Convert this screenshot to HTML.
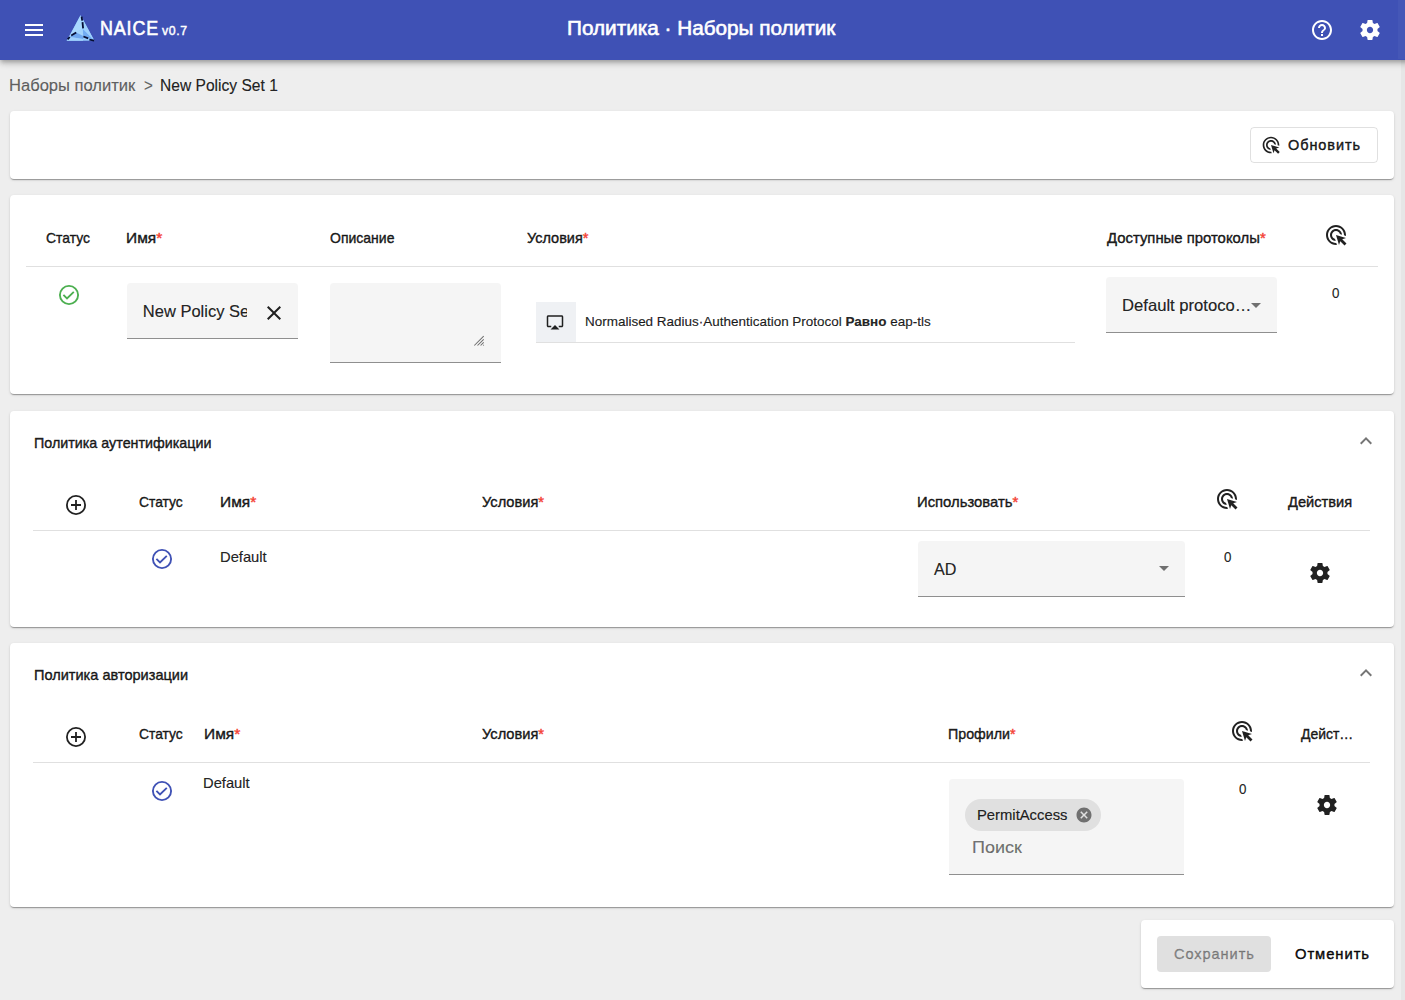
<!DOCTYPE html>
<html><head><meta charset="utf-8">
<title>NAICE</title>
<style>
*{box-sizing:border-box;margin:0;padding:0}
html,body{width:1405px;height:1000px;overflow:hidden}
body{background:#eeeeee;font-family:"Liberation Sans",sans-serif;color:rgba(0,0,0,0.87);position:relative}
.a{position:absolute}
.t{white-space:nowrap;line-height:normal}
.hdr{left:0;top:0;width:1435px;height:60px;background:#3f51b5;box-shadow:0 2px 4px -1px rgba(0,0,0,.2),0 4px 5px 0 rgba(0,0,0,.14),0 1px 10px 0 rgba(0,0,0,.12)}
.card{background:#fff;border-radius:4px;box-shadow:0 2px 1px -1px rgba(0,0,0,.2),0 1px 1px 0 rgba(0,0,0,.14),0 1px 3px 0 rgba(0,0,0,.12)}
.div{height:1px;background:#e0e0e0}
.fill{background:#f5f5f5;border-radius:4px 4px 0 0;border-bottom:1px solid #8f8f8f}
svg{display:block}
#ov{z-index:10}
</style></head>
<body>
<div class="a hdr"></div>
<svg class="a" style="left:64px;top:13px" width="33" height="30" viewBox="0 0 33 30">
  <polygon points="16.5,2.2 30.4,27.8 2.6,27.8" fill="#93c9fc"/>
  <polygon points="16.5,2.2 18.6,15.5 12,19.6 5,24.5" fill="#a9d9fe"/>
  <polygon points="18.6,15.5 30.4,27.8 19.2,23" fill="#72acf2"/>
  <polygon points="18.6,15.5 17.4,3.6 30.4,27.8" fill="#9dd0fd"/>
  <polygon points="12,19.6 18.6,15.5 19.2,23" fill="#a3d4fd"/>
  <polygon points="12,19.6 19.2,23 19,26 6,24" fill="#6ea7ef"/>
  <polygon points="2.6,27.8 19,27.8 19,26 6,24" fill="#9fd1fd"/>
  <g stroke="#050d33" stroke-width="1.8" fill="none" stroke-linecap="butt">
    <path d="M17.6 3.6 L18.2 7.6"/>
    <path d="M18.5 9.2 L19.1 15.4"/>
    <path d="M3.6 26.4 L5.8 24.0"/>
    <path d="M7.2 22.4 L12.2 19.4"/>
    <path d="M19.4 23.5 L24.2 25.4"/>
    <path d="M25.4 26.6 L30.2 27.6"/>
  </g>
</svg>

<!-- cards -->
<div class="a card" style="left:10px;top:111px;width:1384px;height:68px"></div>
<div class="a" style="left:1250px;top:127px;width:128px;height:36px;border:1px solid rgba(0,0,0,0.12);border-radius:4px"></div>

<div class="a card" style="left:10px;top:195px;width:1384px;height:199px"></div>
<div class="a div" style="left:26px;top:266px;width:1352px"></div>
<div class="a fill" style="left:127px;top:283px;width:171px;height:56px"></div>
<div class="a fill" style="left:330px;top:283px;width:171px;height:80px"></div>
<svg class="a" style="left:472px;top:334px" width="14" height="14" viewBox="0 0 14 14"><path d="M2.3 11.5 L11.7 2.1 M5.5 11.5 L11.7 5.3 M8.6 11.5 L11.7 8.4 M11.2 11.5 L11.8 10.9" stroke="#6e6e6e" stroke-width="1.05"/></svg>
<div class="a" style="left:536px;top:302px;width:40px;height:40px;background:#eff1f4"></div>
<div class="a div" style="left:536px;top:342px;width:539px"></div>
<div class="a fill" style="left:1106px;top:277px;width:171px;height:56px"></div>

<div class="a card" style="left:10px;top:411px;width:1384px;height:216px"></div>
<div class="a div" style="left:33px;top:530px;width:1337px"></div>
<div class="a fill" style="left:918px;top:541px;width:267px;height:56px"></div>

<div class="a card" style="left:10px;top:643px;width:1384px;height:264px"></div>
<div class="a div" style="left:33px;top:762px;width:1337px"></div>
<div class="a fill" style="left:949px;top:779px;width:235px;height:96px"></div>
<div class="a" style="left:965px;top:799px;width:136px;height:32px;border-radius:16px;background:#e0e0e0"></div>

<div class="a card" style="left:1141px;top:920px;width:253px;height:68px"></div>
<div class="a" style="left:1157px;top:936px;width:114px;height:36px;border-radius:4px;background:#e0e0e0"></div>

<svg class="a" style="left:22px;top:18px" width="24" height="24" viewBox="0 0 24 24"><path fill="#fff" d="M3 18h18v-2H3v2zm0-5h18v-2H3v2zm0-7v2h18V6H3z"/></svg>
<svg class="a" style="left:1310px;top:18px" width="24" height="24" viewBox="0 0 24 24"><path fill="#fff" d="M11 18h2v-2h-2v2zm1-16C6.48 2 2 6.48 2 12s4.48 10 10 10 10-4.48 10-10S17.52 2 12 2zm0 18c-4.41 0-8-3.59-8-8s3.59-8 8-8 8 3.59 8 8-3.59 8-8 8zm0-14c-2.21 0-4 1.79-4 4h2c0-1.1.9-2 2-2s2 .9 2 2c0 2-3 1.75-3 5h2c0-2.25 3-2.5 3-5 0-2.21-1.79-4-4-4z"/></svg>
<svg class="a" style="left:1358px;top:18px" width="24" height="24" viewBox="0 0 24 24"><path fill="#fff" d="M19.43 12.98c.04-.32.07-.64.07-.98s-.03-.66-.07-.98l2.11-1.65c.19-.15.24-.42.12-.64l-2-3.46c-.12-.22-.39-.3-.61-.22l-2.49 1c-.52-.4-1.08-.73-1.69-.98l-.38-2.65C14.46 2.18 14.25 2 14 2h-4c-.25 0-.46.18-.49.42l-.38 2.65c-.61.25-1.17.59-1.69.98l-2.49-1c-.23-.09-.49 0-.61.22l-2 3.46c-.13.22-.07.49.12.64l2.11 1.65c-.04.32-.07.65-.07.98s.03.66.07.98l-2.11 1.65c-.19.15-.24.42-.12.64l2 3.46c.12.22.39.3.61.22l2.49-1c.52.4 1.08.73 1.69.98l.38 2.65c.03.24.24.42.49.42h4c.25 0 .46-.18.49-.42l.38-2.65c.61-.25 1.17-.59 1.69-.98l2.49 1c.23.09.49 0 .61-.22l2-3.46c.12-.22.07-.49-.12-.64l-2.11-1.65zM12 15.15c-1.74 0-3.15-1.41-3.15-3.15s1.41-3.15 3.15-3.15 3.15 1.41 3.15 3.15-1.41 3.15-3.15 3.15z"/></svg>
<svg class="a" style="left:1261px;top:135px" width="20" height="20" viewBox="0 0 24 24"><path fill="rgba(0,0,0,0.87)" d="M11.71 17.99C8.53 17.84 6 15.22 6 12c0-3.31 2.69-6 6-6 3.22 0 5.84 2.53 5.99 5.71l-2.1-.63C15.48 9.31 13.89 8 12 8c-2.21 0-4 1.79-4 4 0 1.89 1.31 3.48 3.08 3.89l.63 2.1zM22 12c0 .3-.01.6-.04.9l-1.97-.59c.01-.1.01-.21.01-.31 0-4.42-3.58-8-8-8s-8 3.58-8 8 3.58 8 8 8c.1 0 .21 0 .31-.01l.59 1.97c-.3.03-.6.04-.9.04-5.52 0-10-4.48-10-10S6.48 2 12 2s10 4.48 10 10zm-3.77 4.26L22 15l-10-3 3 10 1.26-3.77 4.27 4.27 1.97-1.97-4.27-4.27z"/></svg>
<svg class="a" style="left:1323.5px;top:223px" width="24" height="24" viewBox="0 0 24 24"><path fill="rgba(0,0,0,0.87)" d="M11.71 17.99C8.53 17.84 6 15.22 6 12c0-3.31 2.69-6 6-6 3.22 0 5.84 2.53 5.99 5.71l-2.1-.63C15.48 9.31 13.89 8 12 8c-2.21 0-4 1.79-4 4 0 1.89 1.31 3.48 3.08 3.89l.63 2.1zM22 12c0 .3-.01.6-.04.9l-1.97-.59c.01-.1.01-.21.01-.31 0-4.42-3.58-8-8-8s-8 3.58-8 8 3.58 8 8 8c.1 0 .21 0 .31-.01l.59 1.97c-.3.03-.6.04-.9.04-5.52 0-10-4.48-10-10S6.48 2 12 2s10 4.48 10 10zm-3.77 4.26L22 15l-10-3 3 10 1.26-3.77 4.27 4.27 1.97-1.97-4.27-4.27z"/></svg>
<svg class="a" style="left:56.5px;top:283px" width="24" height="24" viewBox="0 0 24 24"><circle cx="12" cy="12" r="9.1" fill="none" stroke="#4caf50" stroke-width="1.85"/><path d="M6.4 11.9 L10 15.5 L16.8 8.8" fill="none" stroke="#4caf50" stroke-width="1.85"/></svg>
<svg class="a" style="left:262px;top:301px" width="24" height="24" viewBox="0 0 24 24"><path fill="rgba(0,0,0,0.87)" d="M19 6.41 17.59 5 12 10.59 6.41 5 5 6.41 10.59 12 5 17.59 6.41 19 12 13.41 17.59 19 19 17.59 13.41 12z"/></svg>
<svg class="a" style="left:545.6px;top:313px" width="18" height="18" viewBox="0 0 24 24"><path fill="rgba(0,0,0,0.87)" d="M6 22h12l-6-6zM21 3H3c-1.1 0-2 .9-2 2v12c0 1.1.9 2 2 2h4v-2H3V5h18v12h-4v2h4c1.1 0 2-.9 2-2V5c0-1.1-.9-2-2-2z"/></svg>
<svg class="a" style="left:1244px;top:293px" width="24" height="24" viewBox="0 0 24 24"><path fill="rgba(0,0,0,0.54)" d="M7 10l5 5 5-5z"/></svg>
<svg class="a" style="left:1354px;top:429px" width="24" height="24" viewBox="0 0 24 24"><path fill="rgba(0,0,0,0.54)" d="M12 8l-6 6 1.41 1.41L12 10.83l4.59 4.58L18 14z"/></svg>
<svg class="a" style="left:64.2px;top:492.8px" width="24" height="24" viewBox="0 0 24 24"><circle cx="12" cy="12" r="9.1" fill="none" stroke="rgba(0,0,0,0.87)" stroke-width="1.8"/><path d="M12 7 V17 M7 12 H17" fill="none" stroke="rgba(0,0,0,0.87)" stroke-width="1.8"/></svg>
<svg class="a" style="left:1215px;top:486.5px" width="24" height="24" viewBox="0 0 24 24"><path fill="rgba(0,0,0,0.87)" d="M11.71 17.99C8.53 17.84 6 15.22 6 12c0-3.31 2.69-6 6-6 3.22 0 5.84 2.53 5.99 5.71l-2.1-.63C15.48 9.31 13.89 8 12 8c-2.21 0-4 1.79-4 4 0 1.89 1.31 3.48 3.08 3.89l.63 2.1zM22 12c0 .3-.01.6-.04.9l-1.97-.59c.01-.1.01-.21.01-.31 0-4.42-3.58-8-8-8s-8 3.58-8 8 3.58 8 8 8c.1 0 .21 0 .31-.01l.59 1.97c-.3.03-.6.04-.9.04-5.52 0-10-4.48-10-10S6.48 2 12 2s10 4.48 10 10zm-3.77 4.26L22 15l-10-3 3 10 1.26-3.77 4.27 4.27 1.97-1.97-4.27-4.27z"/></svg>
<svg class="a" style="left:149.5px;top:547px" width="24" height="24" viewBox="0 0 24 24"><circle cx="12" cy="12" r="9.1" fill="none" stroke="#3f51b5" stroke-width="1.85"/><path d="M6.4 11.9 L10 15.5 L16.8 8.8" fill="none" stroke="#3f51b5" stroke-width="1.85"/></svg>
<svg class="a" style="left:1152px;top:556px" width="24" height="24" viewBox="0 0 24 24"><path fill="rgba(0,0,0,0.54)" d="M7 10l5 5 5-5z"/></svg>
<svg class="a" style="left:1308px;top:561px" width="24" height="24" viewBox="0 0 24 24"><path fill="rgba(0,0,0,0.87)" d="M19.43 12.98c.04-.32.07-.64.07-.98s-.03-.66-.07-.98l2.11-1.65c.19-.15.24-.42.12-.64l-2-3.46c-.12-.22-.39-.3-.61-.22l-2.49 1c-.52-.4-1.08-.73-1.69-.98l-.38-2.65C14.46 2.18 14.25 2 14 2h-4c-.25 0-.46.18-.49.42l-.38 2.65c-.61.25-1.17.59-1.69.98l-2.49-1c-.23-.09-.49 0-.61.22l-2 3.46c-.13.22-.07.49.12.64l2.11 1.65c-.04.32-.07.65-.07.98s.03.66.07.98l-2.11 1.65c-.19.15-.24.42-.12.64l2 3.46c.12.22.39.3.61.22l2.49-1c.52.4 1.08.73 1.69.98l.38 2.65c.03.24.24.42.49.42h4c.25 0 .46-.18.49-.42l.38-2.65c.61-.25 1.17-.59 1.69-.98l2.49 1c.23.09.49 0 .61-.22l2-3.46c.12-.22.07-.49-.12-.64l-2.11-1.65zM12 15.15c-1.74 0-3.15-1.41-3.15-3.15s1.41-3.15 3.15-3.15 3.15 1.41 3.15 3.15-1.41 3.15-3.15 3.15z"/></svg>
<svg class="a" style="left:1353.7px;top:660.6px" width="24" height="24" viewBox="0 0 24 24"><path fill="rgba(0,0,0,0.54)" d="M12 8l-6 6 1.41 1.41L12 10.83l4.59 4.58L18 14z"/></svg>
<svg class="a" style="left:64.2px;top:724.8px" width="24" height="24" viewBox="0 0 24 24"><circle cx="12" cy="12" r="9.1" fill="none" stroke="rgba(0,0,0,0.87)" stroke-width="1.8"/><path d="M12 7 V17 M7 12 H17" fill="none" stroke="rgba(0,0,0,0.87)" stroke-width="1.8"/></svg>
<svg class="a" style="left:1229.8px;top:718.6px" width="24" height="24" viewBox="0 0 24 24"><path fill="rgba(0,0,0,0.87)" d="M11.71 17.99C8.53 17.84 6 15.22 6 12c0-3.31 2.69-6 6-6 3.22 0 5.84 2.53 5.99 5.71l-2.1-.63C15.48 9.31 13.89 8 12 8c-2.21 0-4 1.79-4 4 0 1.89 1.31 3.48 3.08 3.89l.63 2.1zM22 12c0 .3-.01.6-.04.9l-1.97-.59c.01-.1.01-.21.01-.31 0-4.42-3.58-8-8-8s-8 3.58-8 8 3.58 8 8 8c.1 0 .21 0 .31-.01l.59 1.97c-.3.03-.6.04-.9.04-5.52 0-10-4.48-10-10S6.48 2 12 2s10 4.48 10 10zm-3.77 4.26L22 15l-10-3 3 10 1.26-3.77 4.27 4.27 1.97-1.97-4.27-4.27z"/></svg>
<svg class="a" style="left:149.5px;top:779px" width="24" height="24" viewBox="0 0 24 24"><circle cx="12" cy="12" r="9.1" fill="none" stroke="#3f51b5" stroke-width="1.85"/><path d="M6.4 11.9 L10 15.5 L16.8 8.8" fill="none" stroke="#3f51b5" stroke-width="1.85"/></svg>
<svg class="a" style="left:1074.6px;top:806px" width="18" height="18" viewBox="0 0 24 24"><path fill="rgba(0,0,0,0.5)" d="M12 2C6.47 2 2 6.47 2 12s4.47 10 10 10 10-4.47 10-10S17.53 2 12 2zm5 13.59L15.59 17 12 13.41 8.41 17 7 15.59 10.59 12 7 8.41 8.41 7 12 10.59 15.59 7 17 8.41 13.41 12 17 15.59z"/></svg>
<svg class="a" style="left:1314.6px;top:793px" width="24" height="24" viewBox="0 0 24 24"><path fill="rgba(0,0,0,0.87)" d="M19.43 12.98c.04-.32.07-.64.07-.98s-.03-.66-.07-.98l2.11-1.65c.19-.15.24-.42.12-.64l-2-3.46c-.12-.22-.39-.3-.61-.22l-2.49 1c-.52-.4-1.08-.73-1.69-.98l-.38-2.65C14.46 2.18 14.25 2 14 2h-4c-.25 0-.46.18-.49.42l-.38 2.65c-.61.25-1.17.59-1.69.98l-2.49-1c-.23-.09-.49 0-.61.22l-2 3.46c-.13.22-.07.49.12.64l2.11 1.65c-.04.32-.07.65-.07.98s.03.66.07.98l-2.11 1.65c-.19.15-.24.42-.12.64l2 3.46c.12.22.39.3.61.22l2.49-1c.52.4 1.08.73 1.69.98l.38 2.65c.03.24.24.42.49.42h4c.25 0 .46-.18.49-.42l.38-2.65c.61-.25 1.17-.59 1.69-.98l2.49 1c.23.09.49 0 .61-.22l2-3.46c.12-.22.07-.49-.12-.64l-2.11-1.65zM12 15.15c-1.74 0-3.15-1.41-3.15-3.15s1.41-3.15 3.15-3.15 3.15 1.41 3.15 3.15-1.41 3.15-3.15 3.15z"/></svg>
<div class="a t" style="left:99.57px;top:17.00px;font-size:20.4px;color:#fff;font-weight:normal;-webkit-text-stroke:0.6px #fff;letter-spacing:1.0px;transform:scaleX(0.8769);transform-origin:0 0">NAICE</div>
<div class="a t" style="left:162.00px;top:23.00px;font-size:12.8px;color:#fff;font-weight:normal;-webkit-text-stroke:0.45px #fff;letter-spacing:0.6px;transform:scaleX(0.9615);transform-origin:0 0">v0.7</div>
<div class="a t" style="left:567.17px;top:17.00px;font-size:20.2px;color:#fff;font-weight:normal;-webkit-text-stroke:0.6px #fff;transform:scaleX(1.0268);transform-origin:0 0">Политика · Наборы политик</div>
<div class="a t" style="left:9.41px;top:76.00px;font-size:16.7px;color:rgba(0,0,0,0.6);font-weight:normal;-webkit-text-stroke:0.2px rgba(0,0,0,0.6);transform:scaleX(0.9921);transform-origin:0 0">Наборы политик</div>
<div class="a t" style="left:143.96px;top:76.00px;font-size:16.7px;color:rgba(0,0,0,0.6);font-weight:normal;-webkit-text-stroke:0.2px rgba(0,0,0,0.6);transform:scaleX(0.9074);transform-origin:0 0">&gt;</div>
<div class="a t" style="left:159.70px;top:76.00px;font-size:16.7px;color:rgba(0,0,0,0.87);font-weight:normal;-webkit-text-stroke:0.2px rgba(0,0,0,0.87);transform:scaleX(0.9339);transform-origin:0 0">New Policy Set 1</div>
<div class="a t" style="left:1288.39px;top:137.00px;font-size:14.3px;color:rgba(0,0,0,0.87);font-weight:normal;-webkit-text-stroke:0.45px rgba(0,0,0,0.87);letter-spacing:0.9px;transform:scaleX(1.0141);transform-origin:0 0">Обновить</div>
<div class="a t" style="left:46.04px;top:229.00px;font-size:15px;color:rgba(0,0,0,0.87);font-weight:normal;-webkit-text-stroke:0.45px rgba(0,0,0,0.87);transform:scaleX(0.9279);transform-origin:0 0">Статус</div>
<div class="a t" style="left:125.97px;top:229.00px;font-size:15px;color:rgba(0,0,0,0.87);font-weight:normal;-webkit-text-stroke:0.45px rgba(0,0,0,0.87);transform:scaleX(1.0327);transform-origin:0 0">Имя<span style="color:#f44336;-webkit-text-stroke-color:#f44336">*</span></div>
<div class="a t" style="left:329.84px;top:229.00px;font-size:15px;color:rgba(0,0,0,0.87);font-weight:normal;-webkit-text-stroke:0.45px rgba(0,0,0,0.87);transform:scaleX(0.9340);transform-origin:0 0">Описание</div>
<div class="a t" style="left:527.00px;top:229.00px;font-size:15px;color:rgba(0,0,0,0.87);font-weight:normal;-webkit-text-stroke:0.45px rgba(0,0,0,0.87);transform:scaleX(0.9657);transform-origin:0 0">Условия<span style="color:#f44336;-webkit-text-stroke-color:#f44336">*</span></div>
<div class="a t" style="left:1106.99px;top:229.00px;font-size:15px;color:rgba(0,0,0,0.87);font-weight:normal;-webkit-text-stroke:0.45px rgba(0,0,0,0.87);transform:scaleX(0.9914);transform-origin:0 0">Доступные протоколы<span style="color:#f44336;-webkit-text-stroke-color:#f44336">*</span></div>
<div class="a t" style="left:142.80px;top:302.00px;font-size:16.5px;color:rgba(0,0,0,0.87);font-weight:normal;-webkit-text-stroke:0.2px rgba(0,0,0,0.87);width:104.20px;overflow:hidden">New Policy Se</div>
<div class="a t" style="left:584.60px;top:314.00px;font-size:13.6px;color:rgba(0,0,0,0.87);font-weight:normal;-webkit-text-stroke:0.2px rgba(0,0,0,0.87);transform:scaleX(0.9908);transform-origin:0 0">Normalised Radius·Authentication Protocol <b>Равно</b> eap-tls</div>
<div class="a t" style="left:1121.99px;top:296.00px;font-size:16.5px;color:rgba(0,0,0,0.87);font-weight:normal;-webkit-text-stroke:0.2px rgba(0,0,0,0.87);transform:scaleX(1.0080);transform-origin:0 0">Default protoco…</div>
<div class="a t" style="left:1332.00px;top:284.00px;font-size:15.3px;color:rgba(0,0,0,0.87);font-weight:normal;-webkit-text-stroke:0.2px rgba(0,0,0,0.87);transform:scaleX(0.8750);transform-origin:0 0">0</div>
<div class="a t" style="left:33.63px;top:434.00px;font-size:15px;color:rgba(0,0,0,0.87);font-weight:normal;-webkit-text-stroke:0.45px rgba(0,0,0,0.87);transform:scaleX(0.9535);transform-origin:0 0">Политика аутентификации</div>
<div class="a t" style="left:139.04px;top:493.00px;font-size:15px;color:rgba(0,0,0,0.87);font-weight:normal;-webkit-text-stroke:0.45px rgba(0,0,0,0.87);transform:scaleX(0.9235);transform-origin:0 0">Статус</div>
<div class="a t" style="left:219.58px;top:493.00px;font-size:15px;color:rgba(0,0,0,0.87);font-weight:normal;-webkit-text-stroke:0.45px rgba(0,0,0,0.87);transform:scaleX(1.0327);transform-origin:0 0">Имя<span style="color:#f44336;-webkit-text-stroke-color:#f44336">*</span></div>
<div class="a t" style="left:481.60px;top:493.00px;font-size:15px;color:rgba(0,0,0,0.87);font-weight:normal;-webkit-text-stroke:0.45px rgba(0,0,0,0.87);transform:scaleX(0.9751);transform-origin:0 0">Условия<span style="color:#f44336;-webkit-text-stroke-color:#f44336">*</span></div>
<div class="a t" style="left:917.01px;top:493.00px;font-size:15px;color:rgba(0,0,0,0.87);font-weight:normal;-webkit-text-stroke:0.45px rgba(0,0,0,0.87);transform:scaleX(0.9882);transform-origin:0 0">Использовать<span style="color:#f44336;-webkit-text-stroke-color:#f44336">*</span></div>
<div class="a t" style="left:1287.60px;top:493.00px;font-size:15px;color:rgba(0,0,0,0.87);font-weight:normal;-webkit-text-stroke:0.45px rgba(0,0,0,0.87);transform:scaleX(0.9754);transform-origin:0 0">Действия</div>
<div class="a t" style="left:219.61px;top:549.00px;font-size:14.8px;color:rgba(0,0,0,0.87);font-weight:normal;-webkit-text-stroke:0.2px rgba(0,0,0,0.87);transform:scaleX(0.9958);transform-origin:0 0">Default</div>
<div class="a t" style="left:934.22px;top:560.00px;font-size:16.5px;color:rgba(0,0,0,0.87);font-weight:normal;-webkit-text-stroke:0.2px rgba(0,0,0,0.87);transform:scaleX(0.9778);transform-origin:0 0">AD</div>
<div class="a t" style="left:1223.61px;top:548.00px;font-size:15.3px;color:rgba(0,0,0,0.87);font-weight:normal;-webkit-text-stroke:0.2px rgba(0,0,0,0.87);transform:scaleX(0.8750);transform-origin:0 0">0</div>
<div class="a t" style="left:33.62px;top:666.00px;font-size:15px;color:rgba(0,0,0,0.87);font-weight:normal;-webkit-text-stroke:0.45px rgba(0,0,0,0.87);transform:scaleX(0.9696);transform-origin:0 0">Политика авторизации</div>
<div class="a t" style="left:139.04px;top:725.00px;font-size:15px;color:rgba(0,0,0,0.87);font-weight:normal;-webkit-text-stroke:0.45px rgba(0,0,0,0.87);transform:scaleX(0.9235);transform-origin:0 0">Статус</div>
<div class="a t" style="left:203.97px;top:725.00px;font-size:15px;color:rgba(0,0,0,0.87);font-weight:normal;-webkit-text-stroke:0.45px rgba(0,0,0,0.87);transform:scaleX(1.0327);transform-origin:0 0">Имя<span style="color:#f44336;-webkit-text-stroke-color:#f44336">*</span></div>
<div class="a t" style="left:481.60px;top:725.00px;font-size:15px;color:rgba(0,0,0,0.87);font-weight:normal;-webkit-text-stroke:0.45px rgba(0,0,0,0.87);transform:scaleX(0.9751);transform-origin:0 0">Условия<span style="color:#f44336;-webkit-text-stroke-color:#f44336">*</span></div>
<div class="a t" style="left:948.05px;top:725.00px;font-size:15px;color:rgba(0,0,0,0.87);font-weight:normal;-webkit-text-stroke:0.45px rgba(0,0,0,0.87);transform:scaleX(0.9486);transform-origin:0 0">Профили<span style="color:#f44336;-webkit-text-stroke-color:#f44336">*</span></div>
<div class="a t" style="left:1300.75px;top:725.00px;font-size:15px;color:rgba(0,0,0,0.87);font-weight:normal;-webkit-text-stroke:0.45px rgba(0,0,0,0.87);transform:scaleX(0.9292);transform-origin:0 0">Дейст…</div>
<div class="a t" style="left:203.00px;top:775.00px;font-size:14.8px;color:rgba(0,0,0,0.87);font-weight:normal;-webkit-text-stroke:0.2px rgba(0,0,0,0.87);transform:scaleX(0.9958);transform-origin:0 0">Default</div>
<div class="a t" style="left:977.00px;top:807.00px;font-size:14.8px;color:rgba(0,0,0,0.87);font-weight:normal;-webkit-text-stroke:0.2px rgba(0,0,0,0.87)">PermitAccess</div>
<div class="a t" style="left:971.73px;top:838.00px;font-size:16.7px;color:rgba(0,0,0,0.55);font-weight:normal;-webkit-text-stroke:0.2px rgba(0,0,0,0.55);transform:scaleX(1.0764);transform-origin:0 0">Поиск</div>
<div class="a t" style="left:1239.00px;top:780.00px;font-size:15.3px;color:rgba(0,0,0,0.87);font-weight:normal;-webkit-text-stroke:0.2px rgba(0,0,0,0.87);transform:scaleX(0.8750);transform-origin:0 0">0</div>
<div class="a t" style="left:1173.98px;top:946.00px;font-size:14.3px;color:rgba(0,0,0,0.38);font-weight:normal;-webkit-text-stroke:0.45px rgba(0,0,0,0.38);letter-spacing:0.9px;transform:scaleX(1.0206);transform-origin:0 0">Сохранить</div>
<div class="a t" style="left:1295.00px;top:946.00px;font-size:14.3px;color:rgba(0,0,0,0.95);font-weight:normal;-webkit-text-stroke:0.45px rgba(0,0,0,0.95);letter-spacing:0.9px;transform:scaleX(1.0334);transform-origin:0 0">Отменить</div>
<div class="a" style="left:1398px;top:0;width:7px;height:59px;background:rgba(255,255,255,0.035)"></div>
<div class="a" style="left:1401px;top:60px;width:4px;height:940px;background:rgba(0,0,0,0.03)"></div>
</body></html>
